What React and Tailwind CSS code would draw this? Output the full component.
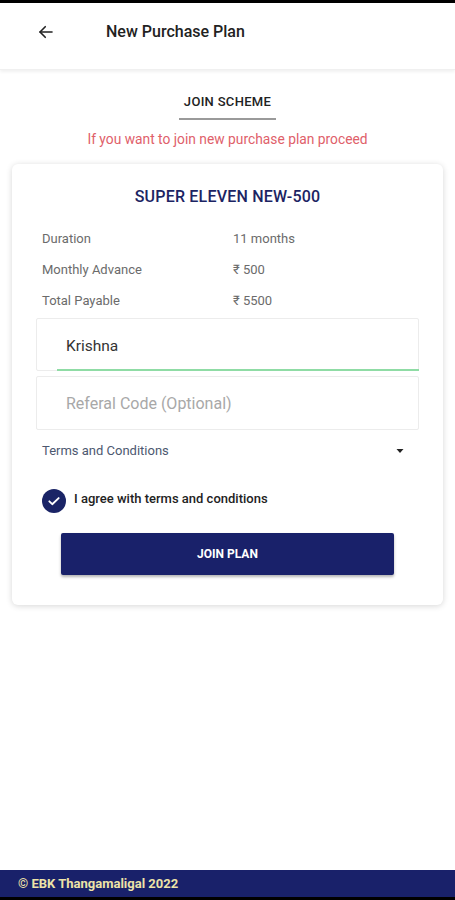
// New Purchase Plan screen

import { useState } from 'react'

export default function App() {
  const [name, setName] = useState('Krishna')
  const [referal, setReferal] = useState('')
  const [agreed, setAgreed] = useState(true)

  const rows = [
    { label: 'Duration', value: '11 months' },
    { label: 'Monthly Advance', value: '₹ 500' },
    { label: 'Total Payable', value: '₹ 5500' },
  ]

  return (
    <div className="h-[900px] flex flex-col bg-white" style={{ fontFamily: 'Roboto, "Noto Sans", sans-serif' }}>
      <div className="h-[3px] bg-black" />

      {/* Header */}
      <header className="h-[67px] flex items-center pb-[9px] shadow-[0_2px_3px_rgba(0,0,0,0.06)] border-b border-[#f0f0f0]">
        <button className="ml-[36px] w-[20px] h-[20px] flex items-center justify-center text-[#222]">
          <svg width="18" height="18" viewBox="0 0 24 24" fill="none" stroke="currentColor" strokeWidth="2.2" strokeLinecap="round" strokeLinejoin="round">
            <path d="M20 12H4" />
            <path d="M11 5l-7 7 7 7" />
          </svg>
        </button>
        <h1 className="ml-[50px] text-[16px] font-medium text-[#222]">New Purchase Plan</h1>
      </header>

      {/* Main Content */}
      <main className="flex-1">
        <div className="flex flex-col items-center pt-[22px]">
          <div className="text-[13px] font-medium text-[#222] tracking-[0.3px] px-[5px] pb-[6px] border-b-2 border-[#9a9a9a]">
            JOIN SCHEME
          </div>
          <p className="mt-[9px] text-[13.8px] text-[#e0606a]">If you want to join new purchase plan proceed</p>
        </div>

        <div className="mx-[12px] mt-[15px] bg-white rounded-[6px] shadow-[0_1px_6px_rgba(0,0,0,0.16)] pt-[21px] pb-[30px]">
          <h2 className="text-center text-[16px] font-medium text-[#1c2463] tracking-[0.2px]">SUPER ELEVEN NEW-500</h2>

          <div className="mt-[22px] px-[30px] flex flex-col gap-[15px]">
            {rows.map((row) => (
              <div key={row.label} className="flex text-[13px] leading-[16px] text-[#6b6b6b]">
                <span className="w-[191px]">{row.label}</span>
                <span>{row.value}</span>
              </div>
            ))}
          </div>

          <div className="mx-[24px] mt-[9px]">
            <div className="h-[53px] border border-[#ececec] rounded-[2px] relative">
              <input
                value={name}
                onChange={(e) => setName(e.target.value)}
                className="w-full h-full pl-[29px] pr-3 pt-[2px] text-[15.5px] text-[#333] outline-none bg-transparent"
              />
              <div className="absolute left-[20px] right-[-1px] bottom-[-1px] h-[2px] bg-[#8fdca5]" />
            </div>
            <div className="mt-[5px] h-[54px] border border-[#ececec] rounded-[2px]">
              <input
                value={referal}
                onChange={(e) => setReferal(e.target.value)}
                placeholder="Referal Code (Optional)"
                className="w-full h-full pl-[29px] pr-3 text-[16px] text-[#333] placeholder:text-[#a8a8a8] outline-none bg-transparent"
              />
            </div>
          </div>

          <div className="mt-[11px] px-[30px] flex items-center justify-between">
            <span className="text-[13px] text-[#4c5870]">Terms and Conditions</span>
            <svg width="10" height="10" viewBox="0 0 10 10" className="mr-[8px]">
              <path d="M1.5 3h7L5 7z" fill="#222" />
            </svg>
          </div>

          <label className="mt-[28px] ml-[30px] flex items-center gap-[8px] cursor-pointer">
            <button
              onClick={() => setAgreed(!agreed)}
              className="w-[24px] h-[24px] rounded-full bg-[#1a2466] flex items-center justify-center"
            >
              {agreed && (
                <svg width="14" height="14" viewBox="0 0 24 24" fill="none" stroke="white" strokeWidth="3.2" strokeLinecap="round" strokeLinejoin="round">
                  <path d="M4 12.5l5 5L20 7" />
                </svg>
              )}
            </button>
            <span className="text-[13px] font-medium text-[#222] -mt-[4px]">I agree with terms and conditions</span>
          </label>

          <div className="mt-[20px] mx-[49px]">
            <button className="w-full h-[42px] rounded-[2px] bg-[#19216a] text-white text-[12px] font-bold shadow-[0_2px_3px_rgba(0,0,0,0.3)]">
              JOIN PLAN
            </button>
          </div>
        </div>
      </main>

      {/* Footer */}
      <footer className="h-[27px] bg-[#19216a] flex items-center pl-[18px]">
        <span className="text-[13px] font-bold text-[#ede3a8]">© EBK Thangamaligal 2022</span>
      </footer>
      <div className="h-[3px] bg-black" />
    </div>
  )
}
